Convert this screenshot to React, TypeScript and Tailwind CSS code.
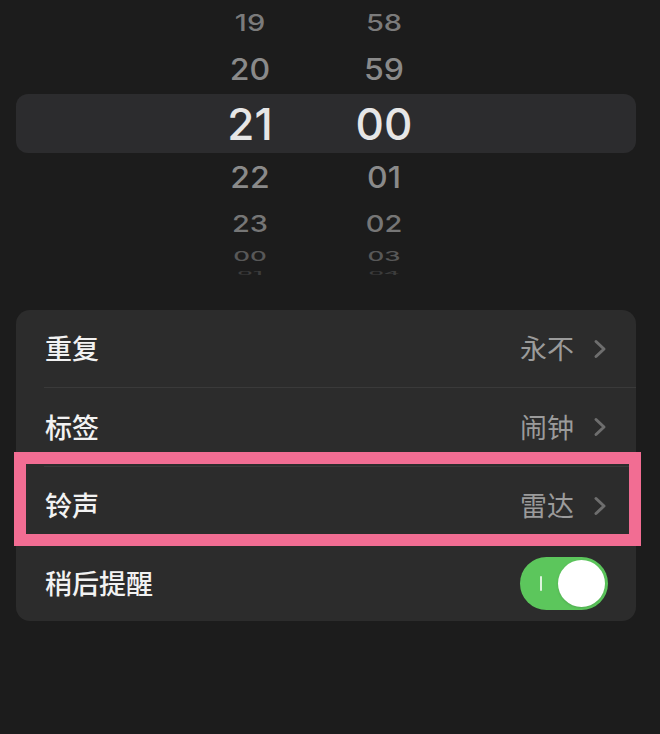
import React from "react";

const NUM = { fontFamily: "Inter, 'Liberation Sans', sans-serif" };
const CJK = { fontFamily: "'Noto Sans CJK SC', 'Noto Sans', sans-serif" };

type Wheel = { h: string; m: string; row: string; text: string };

const wheel: Wheel[] = [
  { h: "19", m: "58", row: "h-[45px]", text: "text-[29px] text-[#7b7b7b] scale-y-[0.78]" },
  { h: "20", m: "59", row: "h-[49px]", text: "text-[32px] text-[#8a8a8a] scale-y-[0.92]" },
  { h: "21", m: "00", row: "h-[59px] ml-4 w-[620px] rounded-xl bg-[#2c2c2e]", text: "text-[44px] font-medium text-[#e6e6e6]" },
  { h: "22", m: "01", row: "h-[49px]", text: "text-[32px] text-[#8a8a8a] scale-y-[0.92]" },
  { h: "23", m: "02", row: "h-[42px]", text: "text-[29px] text-[#767676] scale-y-[0.8]" },
  { h: "00", m: "03", row: "h-[24px]", text: "text-[26px] text-[#585858] scale-y-[0.5]" },
  { h: "01", m: "04", row: "h-[10px]", text: "text-[24px] text-[#3c3c3c] scale-y-[0.2]" },
];

function Chevron() {
  return (
    <svg width="14" height="20" viewBox="0 0 14 20" fill="none">
      <path d="M3 2.5 L11 10 L3 17.5" stroke="#6e6e6e" strokeWidth="3" strokeLinecap="round" strokeLinejoin="round" />
    </svg>
  );
}

function Row({ label, value, h }: { label: string; value: string; h: string }) {
  return (
    <div className={`flex items-center justify-between pl-[29px] pr-[29px] ${h}`}>
      <span className="text-[27px] font-medium text-[#f2f2f2]" style={CJK}>{label}</span>
      <div className="flex items-center gap-[19px]">
        <span className="text-[27px] text-[#9b9b9b]" style={CJK}>{value}</span>
        <Chevron />
      </div>
    </div>
  );
}

export default function App() {
  return (
    <div className="w-[660px] h-[734px] bg-[#1c1c1c] overflow-hidden">
      <div className="flex flex-col">
        {wheel.map((w, i) => (
          <div key={i} className={`flex items-center overflow-hidden ${w.row}`}>
            <div className={`flex items-center ${i === 2 ? "pl-[184px]" : "pl-[200px]"}`}>
              <span className={`w-[100px] text-center font-medium leading-none ${w.text}`} style={NUM}>{w.h}</span>
              <span className={`ml-[34px] w-[100px] text-center font-medium leading-none ${w.text}`} style={NUM}>{w.m}</span>
            </div>
          </div>
        ))}
      </div>

      <div className="relative ml-4 mt-8 w-[620px] rounded-[14px] bg-[#2c2c2c]">
        <Row label="重复" value="永不" h="h-[77px]" />
        <div className="ml-[28px] h-px bg-[#3a3a3a]" />
        <Row label="标签" value="闹钟" h="h-[78px]" />
        <div className="ml-[28px] h-px bg-[#3a3a3a]" />
        <Row label="铃声" value="雷达" h="h-[77px]" />
        <div className="ml-[28px] h-px bg-[#3a3a3a]" />
        <div className="flex h-[76px] items-center justify-between pl-[29px] pr-[28px]">
          <span className="text-[27px] font-medium text-[#f2f2f2]" style={CJK}>稍后提醒</span>
          <div className="flex h-[53px] w-[88px] items-center rounded-full bg-[#5cc65c] pl-[20px] pr-[3px]">
            <span className="h-[15px] w-[2px] rounded bg-white/80" />
            <span className="ml-auto h-[47px] w-[47px] rounded-full bg-white shadow" />
          </div>
        </div>

        <div className="pointer-events-none absolute left-[-2px] top-[142px] h-[94px] w-[627px] border-[12px] border-[#f26d93]" />
      </div>
    </div>
  );
}
